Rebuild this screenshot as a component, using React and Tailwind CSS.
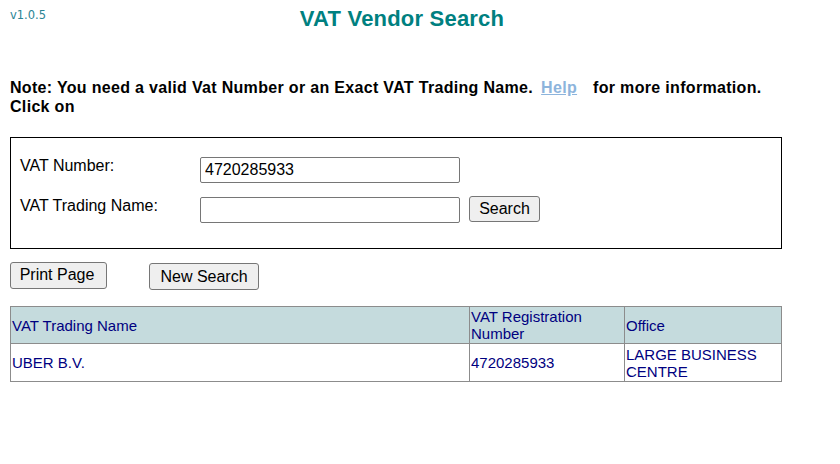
const rows = [
  { name: "UBER B.V.", number: "4720285933", office: "LARGE BUSINESS CENTRE" },
];

const App = () => {
  return (
    <div className="min-h-screen bg-white px-[10px] font-['Liberation_Sans',Arial,sans-serif] text-black">
      <div className="flex w-[784px] items-start pt-[7px]">
        <span className="mt-[2px] w-0 whitespace-nowrap font-['DejaVu_Sans',sans-serif] text-[11.5px] leading-[13px] text-[#2a8494]">
          v1.0.5
        </span>
        <h1 className="flex-1 text-center text-[22px] font-bold leading-[24px] tracking-[0.2px] text-[#008080]">
          VAT Vendor Search
        </h1>
      </div>

      <div className="mt-[47px] text-[16px] font-bold leading-[19px] tracking-[0.32px]">
        <div className="flex whitespace-nowrap">
          <span>Note: You need a valid Vat Number or an Exact VAT Trading Name.</span>
          <a href="#" className="ml-[8px] text-[#8db4dc] underline">
            Help
          </a>
          <span className="ml-[16px]">for more information.</span>
        </div>
        <div>Click on</div>
      </div>

      <div className="mt-[21px] h-[112px] w-[772px] border border-black pl-[9px] pt-[19px] text-[16px]">
        <div className="flex items-start">
          <label className="w-[180px] leading-[18px]">VAT Number:</label>
          <input
            type="text"
            defaultValue="4720285933"
            className="h-[26px] w-[260px] rounded-[2px] border border-[#767676] px-[4px] text-[16px] outline-none"
          />
        </div>
        <div className="mt-[14px] flex items-start">
          <label className="w-[180px] leading-[18px]">VAT Trading Name:</label>
          <input
            type="text"
            className="h-[26px] w-[260px] rounded-[2px] border border-[#767676] px-[4px] text-[16px] outline-none"
          />
          <button
            type="button"
            className="-mt-[1px] ml-[9px] h-[26px] w-[71px] rounded-[3px] border border-[#767676] bg-[#efefef] text-[16px] leading-[18px]"
          >
            Search
          </button>
        </div>
      </div>

      <div className="mt-[13px] flex items-start">
        <button
          type="button"
          className="h-[27px] w-[97px] rounded-[3px] border border-[#767676] bg-[#efefef] pb-[2px] pr-[3px] text-[16px] leading-[18px]"
        >
          Print Page
        </button>
        <button
          type="button"
          className="ml-[42px] mt-[1px] h-[27px] w-[110px] rounded-[3px] border border-[#767676] bg-[#efefef] text-[16px] leading-[18px]"
        >
          New Search
        </button>
      </div>

      <table className="mt-[16px] w-[771px] table-fixed border-collapse border border-[#8c8c8c] text-[15px] leading-[17px] text-[#000080]">
        <colgroup>
          <col className="w-[459px]" />
          <col className="w-[155px]" />
          <col className="w-[157px]" />
        </colgroup>
        <thead>
          <tr className="h-[37px] bg-[#c5dbdd] text-left">
            <th className="border border-[#8c8c8c] px-[1px] font-normal">VAT Trading Name</th>
            <th className="border border-[#8c8c8c] px-[1px] font-normal">VAT Registration Number</th>
            <th className="border border-[#8c8c8c] px-[1px] font-normal">Office</th>
          </tr>
        </thead>
        <tbody>
          {rows.map((row) => (
            <tr key={row.number} className="h-[38px]">
              <td className="border border-[#8c8c8c] px-[1px]">{row.name}</td>
              <td className="border border-[#8c8c8c] px-[1px]">{row.number}</td>
              <td className="border border-[#8c8c8c] px-[1px]">{row.office}</td>
            </tr>
          ))}
        </tbody>
      </table>
    </div>
  );
};

export default App;
